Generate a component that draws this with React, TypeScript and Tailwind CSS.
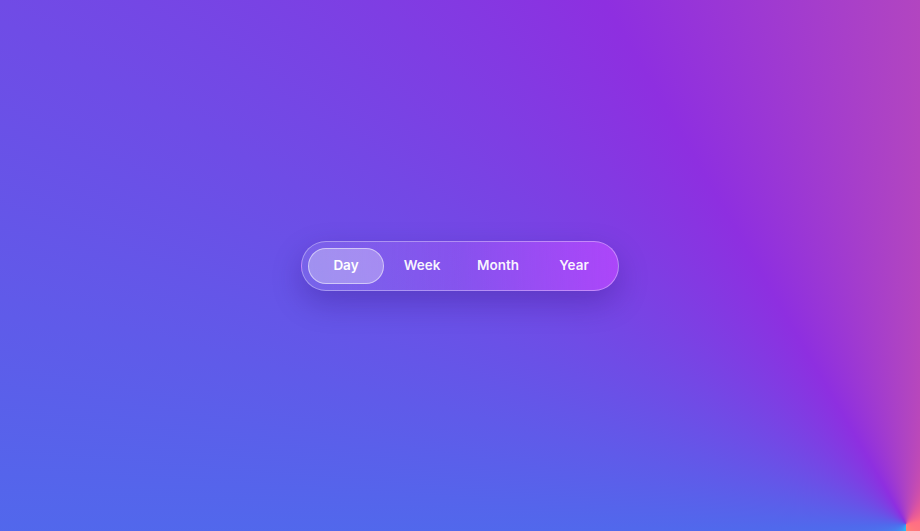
import { useState } from 'react';

const ranges = ['Day', 'Week', 'Month', 'Year'];

export default function App() {
  const [active, setActive] = useState('Day');

  return (
    <div className="flex h-screen w-full items-center justify-center bg-[conic-gradient(from_180deg_at_98.5%_98.7%,#1cc8f2_0deg,#3f8ff0_40deg,#5069ec_88deg,#8e2fe0_150deg,#b044c2_180deg,#e0569e_215deg,#ff6e84_260deg,#ff8276_360deg)] font-['Inter','Liberation_Sans',sans-serif]">
      <div className="flex rounded-full border border-white/35 bg-linear-to-r from-white/10 via-[#a35cf8]/45 to-[#b848ff]/80 px-1.5 py-1.5 shadow-[0_12px_30px_rgba(40,10,110,0.28)]">
        {ranges.map((range) => (
          <button
            key={range}
            onClick={() => setActive(range)}
            className={
              active === range
                ? 'h-9 w-[76px] rounded-full border border-white/50 bg-white/30 text-[13.5px] font-semibold text-white'
                : 'h-9 w-[76px] rounded-full border border-transparent text-[13.5px] font-semibold text-white/95'
            }
          >
            {range}
          </button>
        ))}
      </div>
    </div>
  );
}
